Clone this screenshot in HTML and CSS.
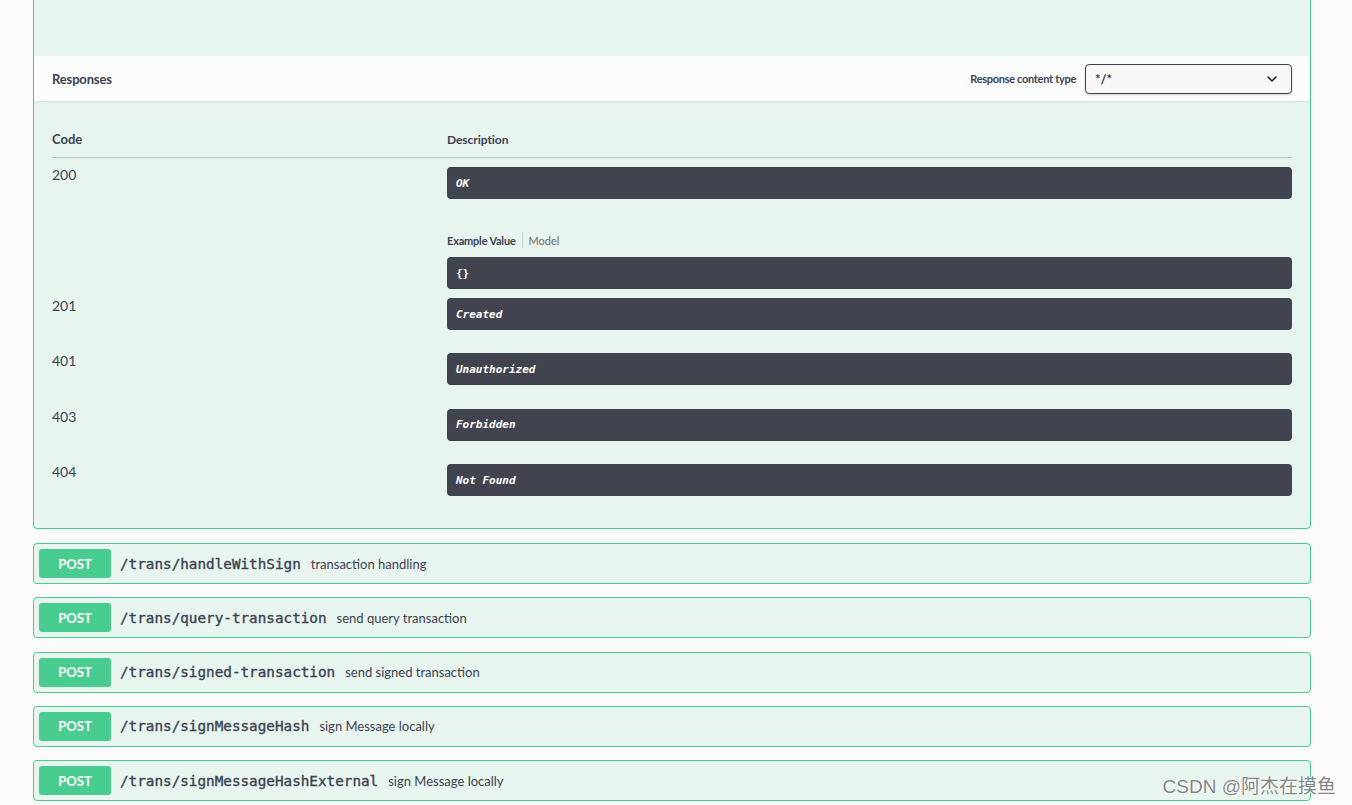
FILE: index.html
```html
<!DOCTYPE html>
<html lang="en">
<head>
<meta charset="utf-8">
<title>Swagger UI</title>
<link rel="stylesheet" href="styles.css">
</head>
<body>
<div class="wrapper">
  <div class="opblock open">
    <div class="op-top"></div>
    <div class="section-header">
      <h4 class="section-title">Responses</h4>
      <div class="content-type">
        <span class="ct-label">Response content type</span>
        <div class="select">
          <span class="select-value">*/*</span>
          <svg class="chevron" width="10" height="6" viewBox="0 0 10 6"><path d="M1 1l4 4 4-4" fill="none" stroke="#222" stroke-width="1.6" stroke-linecap="round" stroke-linejoin="round"/></svg>
        </div>
      </div>
    </div>
    <div class="responses">
      <div class="resp-head">
        <div class="col-code head-code">Code</div>
        <div class="col-desc head-desc">Description</div>
      </div>
      <div class="resp-row first">
        <div class="col-code code">200</div>
        <div class="col-desc">
          <div class="md">OK</div>
          <div class="tabs">
            <span class="tab active">Example Value</span>
            <span class="tab-sep"></span>
            <span class="tab">Model</span>
          </div>
          <div class="md example">{}</div>
        </div>
      </div>
      <div class="resp-row">
        <div class="col-code code">201</div>
        <div class="col-desc"><div class="md">Created</div></div>
      </div>
      <div class="resp-row">
        <div class="col-code code">401</div>
        <div class="col-desc"><div class="md">Unauthorized</div></div>
      </div>
      <div class="resp-row">
        <div class="col-code code">403</div>
        <div class="col-desc"><div class="md">Forbidden</div></div>
      </div>
      <div class="resp-row">
        <div class="col-code code">404</div>
        <div class="col-desc"><div class="md">Not Found</div></div>
      </div>
    </div>
  </div>

  <div class="opblock summary">
    <span class="method">POST</span>
    <span class="path">/trans/handleWithSign</span>
    <span class="desc">transaction handling</span>
  </div>
  <div class="opblock summary">
    <span class="method">POST</span>
    <span class="path">/trans/query-transaction</span>
    <span class="desc">send query transaction</span>
  </div>
  <div class="opblock summary">
    <span class="method">POST</span>
    <span class="path">/trans/signed-transaction</span>
    <span class="desc">send signed transaction</span>
  </div>
  <div class="opblock summary">
    <span class="method">POST</span>
    <span class="path">/trans/signMessageHash</span>
    <span class="desc">sign Message locally</span>
  </div>
  <div class="opblock summary">
    <span class="method">POST</span>
    <span class="path">/trans/signMessageHashExternal</span>
    <span class="desc">sign Message locally</span>
  </div>
</div>
<div class="watermark">CSDN @阿杰在摸鱼</div>
</body>
</html>
```

FILE: styles.css
```css
* { box-sizing: border-box; }
html, body { margin: 0; padding: 0; }
body {
  background: #fafafa;
  font-family: Lato, "Noto Sans", sans-serif;
  color: #3b4151;
  overflow: hidden;
  height: 805px;
  position: relative;
}
.wrapper {
  margin-left: 33px;
  width: 1278px;
}
.opblock {
  border: 1px solid #49cc90;
  background: #e8f5ef;
  border-radius: 4px;
}
.opblock.open {
  margin-top: -1px;
  border-top-left-radius: 0;
  border-top-right-radius: 0;
  margin-bottom: 14px;
}
.op-top { height: 56px; }
.section-header {
  height: 45px;
  display: flex;
  align-items: center;
  justify-content: space-between;
  padding: 0 18px;
  background: #fafdfc;
  box-shadow: 0 1px 2px rgba(0,0,0,.1);
}
.section-title {
  margin: 0;
  font-size: 13px;
  letter-spacing: -0.15px;
  font-weight: 700;
}
.content-type {
  display: flex;
  align-items: center;
  gap: 9px;
}
.ct-label {
  font-size: 11px;
  letter-spacing: -0.3px;
  font-weight: 700;
}
.select {
  width: 207px;
  height: 30px;
  border: 1px solid #41444e;
  border-radius: 4px;
  background: #f7f7f7;
  box-shadow: 0 1px 2px rgba(0,0,0,.2);
  display: flex;
  align-items: center;
  justify-content: space-between;
  padding: 0 14px 0 9px;
}
.select-value {
  font-size: 13px;
  font-weight: 700;
}
.responses {
  padding: 20px 18px 17.6px;
}
.resp-head {
  display: flex;
  align-items: center;
  height: 37px;
  border-bottom: 1px solid #b8c2be;
}
.col-code { width: 395px; flex: none; }
.col-desc { flex: 1; }
.head-code { font-size: 13px; font-weight: 700; }
.head-desc { font-size: 12px; font-weight: 700; letter-spacing: -0.05px; }
.resp-row {
  display: flex;
  padding: 9px 0 14.4px;
}
.resp-row.first { padding-bottom: 0; }
.code {
  font-size: 14px;
  line-height: 16px;
}
.md {
  background: #41444e;
  color: #fff;
  border-radius: 4px;
  height: 32px;
  padding: 0 9px;
  display: flex;
  align-items: center;
  font-family: "DejaVu Sans Mono", monospace;
  font-size: 11px;
  font-weight: 700;
  font-style: italic;
}
.md.example { font-style: normal; }
.tabs {
  display: flex;
  align-items: center;
  height: 16px;
  margin: 33px 0 9px;
  font-size: 11px;
}
.tab { color: #706a64; }
.tab.active {
  color: #3b4151;
  font-weight: 700;
  letter-spacing: -0.2px;
}
.tab-sep {
  width: 1px;
  height: 16px;
  background: #c6ccca;
  margin: 0 6px;
}
.summary {
  height: 41px;
  display: flex;
  align-items: center;
  padding: 0 5px;
  margin-bottom: 13.25px;
}
.method {
  width: 72px;
  height: 29px;
  background: #49cc90;
  color: #fff;
  border-radius: 3px;
  font-size: 13px;
  font-weight: 700;
  display: flex;
  align-items: center;
  justify-content: center;
  flex: none;
}
.path {
  font-family: "DejaVu Sans Mono", monospace;
  font-size: 14.3px;
  font-weight: 400;
  -webkit-text-stroke: 0.35px #3b4151;
  padding: 0 10px 0 9px;
  color: #3b4151;
}
.desc {
  font-size: 13px;
  color: #3b4151;
}
.watermark {
  position: absolute;
  right: 16px;
  bottom: 7px;
  font-family: "Liberation Sans", "Noto Sans CJK SC", sans-serif;
  font-size: 19px;
  color: rgba(110,110,110,.85);
  text-shadow: 0 0 2px #fff, 0 0 2px #fff;
}
```
